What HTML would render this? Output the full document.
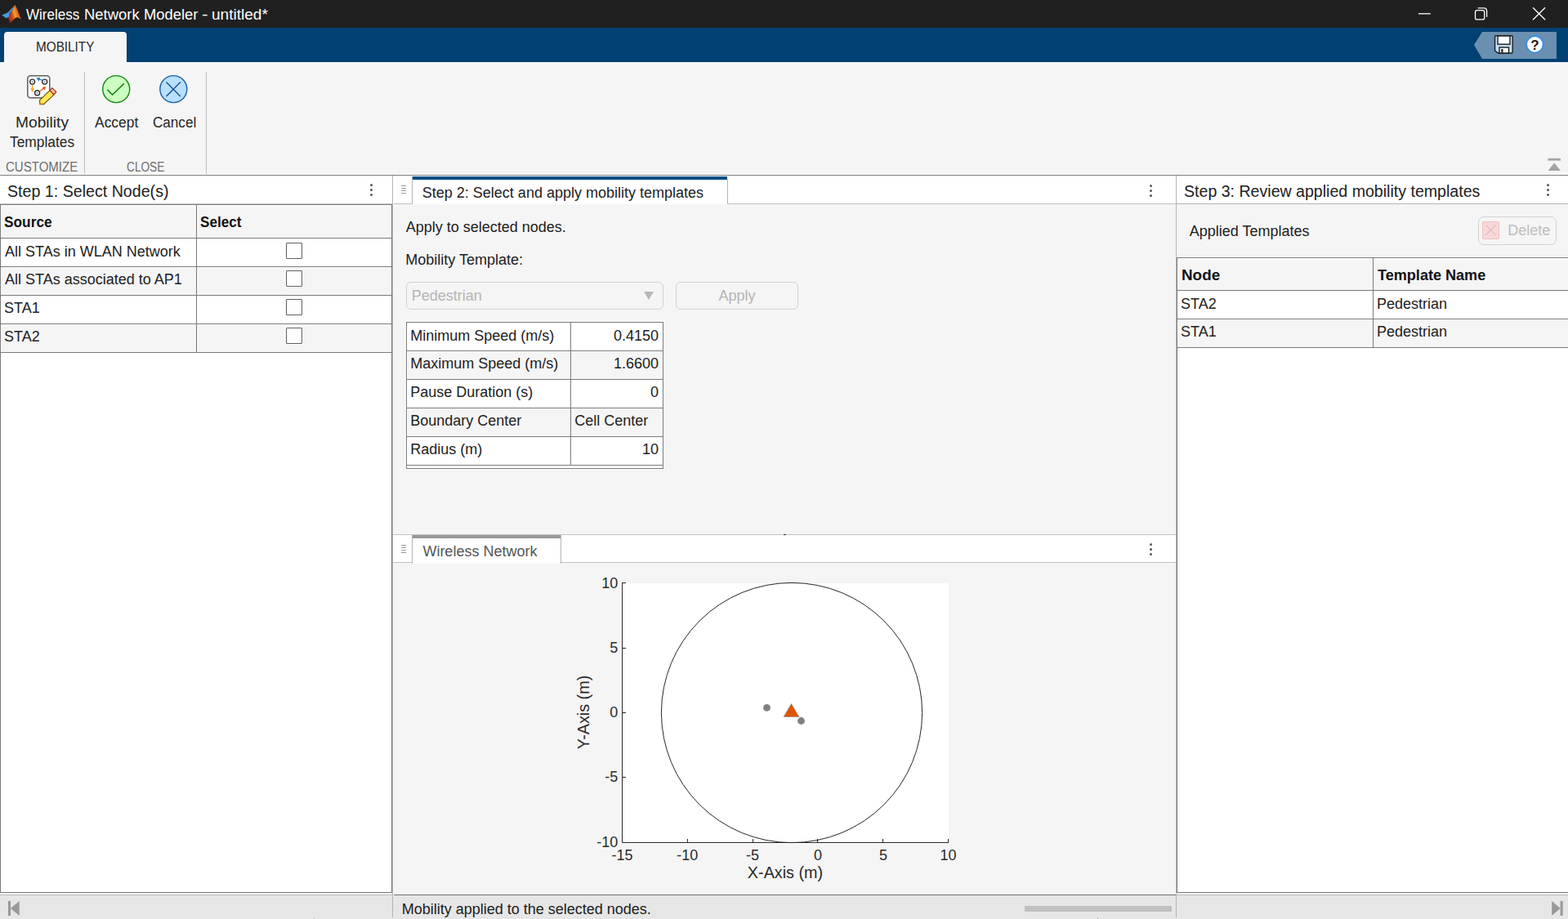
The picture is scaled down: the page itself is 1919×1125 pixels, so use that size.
<!DOCTYPE html>
<html lang="en">
<head>
<meta charset="utf-8">
<title>Wireless Network Modeler - untitled*</title>
<style>
*{box-sizing:border-box;margin:0;padding:0}
html,body{width:1919px;height:1125px;overflow:hidden;background:#f5f5f5}
body{position:relative;font-family:"Liberation Sans",sans-serif;font-size:18px;color:#212121}
.a{position:absolute}
.t{position:absolute;white-space:nowrap;line-height:1;transform-origin:0 0}
svg{position:absolute;overflow:visible}
#titlebar{left:0;top:0;width:1919px;height:34px;background:#202020}
#band{left:0;top:34px;width:1919px;height:42px;background:#004073}
#tab{left:5px;top:39px;width:150px;height:37px;background:#f5f5f5;border-radius:4px 4px 0 0}
#strip{left:0;top:76px;width:1919px;height:138px;background:#f5f5f5}
#stripline{left:0;top:214px;width:1919px;height:1px;background:#7d7d7d}
.vsep{width:1px;background:#bdbdbd;top:88px;height:126px}
.hdr{background:#fff}
.tbl{background:#fff;border:1px solid #7a7a7a}
.hl{position:absolute;height:1px;background:#7a7a7a}
.vl{position:absolute;width:1px;background:#7a7a7a}
.bg{position:absolute;background:#f5f5f5}
.cb{position:absolute;width:20px;height:20px;border:1px solid #5e5e5e;background:#fff;border-radius:1px;box-shadow:0 0 0 1px #fff}
.dot{position:absolute;width:3px;height:3px;border-radius:50%;background:#555}
.gl{position:absolute;width:6px;height:1px;background:#9a9a9a}
.div{position:absolute;background:#b4b4b4}
</style>
</head>
<body>
<!-- ===== title bar ===== -->
<div class="a" id="titlebar"></div>
<svg style="left:0;top:0" width="34" height="34" viewBox="0 0 34 34">
 <defs>
  <linearGradient id="lgo" gradientUnits="userSpaceOnUse" x1="10" y1="20" x2="26" y2="15">
   <stop offset="0" stop-color="#a82a14"/><stop offset="0.3" stop-color="#cf4a1c"/><stop offset="0.5" stop-color="#f6a324"/><stop offset="0.68" stop-color="#e8701e"/><stop offset="1" stop-color="#c0401a"/>
  </linearGradient>
 </defs>
 <path d="M2.2 18.4 L9.2 15.4 L15 9.8 L18.2 6.2 L14 14 L10.6 21 L7.4 22.2 Z" fill="#4a9be0"/>
 <path d="M10.8 15.8 L13.6 13.2 L11.6 18.6 Z" fill="#5a3550" opacity="0.7"/>
 <path d="M18.4 6 C20 8.5 21.5 12.5 23 16.5 C24 19.5 25 22 26 23.8 C24.5 23 22.5 21.2 20.6 21.3 C18.5 21.6 15.5 25.5 12.4 27.9 L10.2 21.6 C12 19.5 13.5 16 15.2 12.5 C16.3 10.2 17.3 7.6 18.4 6 Z" fill="url(#lgo)"/>
</svg>
<svg style="left:1730px;top:0" width="170" height="34" viewBox="1730 0 170 34" fill="none" stroke="#fff" stroke-width="1.3">
 <path d="M1736 16.8 H1750.8"/>
 <rect x="1805.5" y="12.7" width="11.2" height="11.2" rx="2.2"/>
 <path d="M1808.6 9.8 H1815.8 Q1819.6 9.8 1819.6 13.6 V20.8"/>
 <path d="M1876 9.2 L1891.1 24.2 M1891.1 9.2 L1876 24.2"/>
</svg>
<!-- ===== blue band ===== -->
<div class="a" id="band"></div>
<div class="a" id="tab"></div>
<svg style="left:1800px;top:34px" width="119" height="42" viewBox="1800 34 119 42">
 <path d="M1804 55 L1814 39 H1905 V72 H1814 Z" fill="#6a8fb0"/>
 <!-- save icon -->
 <path d="M1830.5 43.8 H1850 Q1851.2 43.8 1851.2 45 V63.8 Q1851.2 65 1850 65 H1833.5 L1829.6 62 V45 Q1829.6 43.8 1830.5 43.8 Z" fill="#bfe0ff" stroke="#1c1c1c" stroke-width="1.4"/>
 <rect x="1833" y="44" width="15" height="10.2" fill="#fff" stroke="#1c1c1c" stroke-width="1.4"/>
 <rect x="1835" y="58" width="11.5" height="7" fill="#fff" stroke="#1c1c1c" stroke-width="1.4"/>
 <rect x="1837.3" y="60" width="2.2" height="4.5" fill="#1c1c1c"/>
 <!-- help -->
 <circle cx="1878.4" cy="54.3" r="10.2" fill="#fff" stroke="#2f8fe6" stroke-width="1.6"/>
 <text x="1878.4" y="60.5" text-anchor="middle" font-family="Liberation Sans, sans-serif" font-weight="bold" font-size="17" fill="#1a1a1a">?</text>
</svg>
<!-- ===== toolstrip ===== -->
<div class="a" id="strip"></div>
<div class="a vsep" style="left:103px"></div>
<div class="a vsep" style="left:252px"></div>
<div class="a" style="left:0;top:213px;width:1919px;height:1px;background:#fcfcfc"></div>
<div class="a" id="stripline"></div>
<svg style="left:0;top:76px" width="260" height="138" viewBox="0 76 260 138">
 <!-- mobility templates icon -->
 <rect x="33.8" y="92.8" width="27" height="27" rx="3.5" fill="#fff" stroke="#5e5e5e" stroke-width="1.5"/>
 <g fill="#fff" stroke="#2e2e2e" stroke-width="1.4">
  <circle cx="39.6" cy="100.1" r="3"/><circle cx="54.7" cy="100.1" r="3"/><circle cx="45.6" cy="113.7" r="3"/>
 </g>
 <g fill="#555"><circle cx="39.6" cy="100.1" r="0.8"/><circle cx="54.7" cy="100.1" r="0.8"/><circle cx="45.6" cy="113.7" r="0.8"/></g>
 <path d="M51.5 98.2 L47.5 96.8" stroke="#1f7fd6" stroke-width="1.3" fill="none"/>
 <path d="M44.3 95.6 L49.2 94.8 L47.6 99.4 Z" fill="#1f7fd6"/>
 <path d="M39.6 104 V109" stroke="#f4a020" stroke-width="1.3" fill="none"/>
 <path d="M37.3 108.2 H41.9 L39.6 113 Z" fill="#f4a020"/>
 <path d="M49 111.4 L53.2 108.2" stroke="#e85d0c" stroke-width="1.3" fill="none"/>
 <path d="M56.3 106 L54.6 110.6 L51.6 106.8 Z" fill="#e85d0c"/>
 <!-- pencil -->
 <path d="M48.6 122.6 L61 110.6 L66 115.8 L53.6 127.6 H48.6 Z" fill="#ffe65c" stroke="#6b4a00" stroke-width="1.1" stroke-linejoin="round"/>
 <path d="M61 110.6 L63.8 107.6 L68.8 112.6 L66 115.8 Z" fill="#f3c9a0" stroke="#a8321c" stroke-width="1.3" stroke-linejoin="round"/>
 <path d="M48.9 125.3 V127.3 H52.6" fill="none" stroke="#c8741c" stroke-width="1.4"/>
 <!-- accept -->
 <circle cx="142.2" cy="109.1" r="16.5" fill="#ccffc2" stroke="#108a10" stroke-width="1.4"/>
 <path d="M131.3 109.7 L137.6 116 L151.9 102.3" fill="none" stroke="#0a7a0a" stroke-width="1.5"/>
 <!-- cancel -->
 <circle cx="212.3" cy="109.1" r="16.5" fill="#b8e0ff" stroke="#1b5cae" stroke-width="1.4"/>
 <path d="M203.5 100.5 L220.8 117.9 M220.8 100.5 L203.5 117.9" fill="none" stroke="#1b4f96" stroke-width="1.4"/>
 </svg>
<svg style="left:1890px;top:190px" width="24" height="24" viewBox="1890 190 24 24">
 <rect x="1894.5" y="193.8" width="15.5" height="2.8" fill="#a3a3a3"/>
 <path d="M1894.5 208.9 L1902.2 199.4 L1910 208.9 Z" fill="#a3a3a3"/>
</svg>

<!-- ===== LEFT PANEL ===== -->
<div class="a hdr" style="left:0;top:215px;width:480px;height:35px"></div><div class="a" style="left:0;top:249px;width:480px;height:1px;background:#c6c6c6"></div>
<div class="a tbl" style="left:0;top:250px;width:480px;height:843px"></div>
<div class="bg" style="left:2px;top:252px;width:238px;height:39px"></div><div class="bg" style="left:241px;top:252px;width:238px;height:39px"></div>
<div class="bg" style="left:2px;top:328px;width:238px;height:33px"></div><div class="bg" style="left:241px;top:328px;width:238px;height:33px"></div>
<div class="bg" style="left:2px;top:398px;width:238px;height:33px"></div><div class="bg" style="left:241px;top:398px;width:238px;height:33px"></div>
<div class="hl" style="left:0;top:291px;width:480px"></div>
<div class="hl" style="left:0;top:326px;width:480px"></div>
<div class="hl" style="left:0;top:361px;width:480px"></div>
<div class="hl" style="left:0;top:396px;width:480px"></div>
<div class="hl" style="left:0;top:431px;width:480px"></div>
<div class="vl" style="left:240px;top:250px;height:182px"></div>
<div class="cb" style="left:350px;top:297px"></div>
<div class="cb" style="left:350px;top:331px"></div>
<div class="cb" style="left:350px;top:366px"></div>
<div class="cb" style="left:350px;top:401px"></div>
<div class="dot" style="left:452.5px;top:224.5px"></div><div class="dot" style="left:452.5px;top:230.5px"></div><div class="dot" style="left:452.5px;top:236.5px"></div>

<!-- ===== MIDDLE PANEL (top) ===== -->
<div class="div" style="left:480px;top:215px;width:1px;height:908px"></div>
<div class="a hdr" style="left:481px;top:215px;width:958px;height:34px"></div>
<div class="div" style="left:482px;top:249px;width:957px;height:1px;background:#c2c2c2"></div>
<div class="a" style="left:504px;top:216px;width:387px;height:34px;background:#fff;border-left:1px solid #b4b4b4;border-right:1px solid #b4b4b4"></div>
<div class="a" style="left:505px;top:216px;width:385px;height:4px;background:#004b87"></div><div class="a" style="left:890px;top:216px;width:1px;height:4px;background:#fff"></div>
<div class="gl" style="left:491px;top:227px"></div><div class="gl" style="left:491px;top:230px"></div><div class="gl" style="left:491px;top:233px"></div><div class="gl" style="left:491px;top:236px"></div>
<div class="dot" style="left:1406.5px;top:225.5px"></div><div class="dot" style="left:1406.5px;top:231.5px"></div><div class="dot" style="left:1406.5px;top:237.5px"></div>
<!-- dropdown + button -->
<div class="a" style="left:497px;top:345px;width:315px;height:34px;border:1px solid #d2d2d2;border-radius:6px;background:#f5f5f5"></div>
<svg style="left:785px;top:354px" width="18" height="16" viewBox="785 354 18 16"><path d="M788 357 H800 L794 367 Z" fill="#b8b8b8"/></svg>
<div class="a" style="left:827px;top:345px;width:150px;height:34px;border:1px solid #d2d2d2;border-radius:6px;background:#f5f5f5"></div>
<!-- property table -->
<div class="a tbl" style="left:497px;top:394px;width:315px;height:180px;box-shadow:0 0 0 1px #fafafa"></div>
<div class="bg" style="left:499px;top:431px;width:199px;height:33px"></div><div class="bg" style="left:699px;top:431px;width:112px;height:33px"></div>
<div class="bg" style="left:499px;top:501px;width:199px;height:33px"></div><div class="bg" style="left:699px;top:501px;width:112px;height:33px"></div>
<div class="hl" style="left:497px;top:429px;width:315px"></div>
<div class="hl" style="left:497px;top:464px;width:315px"></div>
<div class="hl" style="left:497px;top:499px;width:315px"></div>
<div class="hl" style="left:497px;top:534px;width:315px"></div>
<div class="hl" style="left:497px;top:569px;width:315px"></div>
<div class="vl" style="left:698px;top:394px;height:176px"></div>

<!-- ===== MIDDLE PANEL (bottom) ===== -->
<div class="div" style="left:481px;top:654px;width:958px;height:1px;background:#c2c2c2"></div>
<div class="a hdr" style="left:481px;top:655px;width:958px;height:33px"></div>
<div class="div" style="left:481px;top:688px;width:958px;height:1px;background:#c2c2c2"></div>
<div class="a" style="left:504px;top:655px;width:183px;height:35px;background:#fff;border-left:1px solid #b4b4b4;border-right:1px solid #b4b4b4"></div>
<div class="a" style="left:505px;top:655px;width:181px;height:4px;background:#999"></div>
<div class="gl" style="left:491px;top:667px"></div><div class="gl" style="left:491px;top:670px"></div><div class="gl" style="left:491px;top:673px"></div><div class="gl" style="left:491px;top:676px"></div>
<div class="dot" style="left:1406.5px;top:664.5px"></div><div class="dot" style="left:1406.5px;top:670.5px"></div><div class="dot" style="left:1406.5px;top:676.5px"></div>
<div class="a" style="left:959px;top:654px;width:3px;height:1px;background:#222"></div>
<!-- plot -->
<svg style="left:481px;top:689px" width="958" height="406" viewBox="481 689 958 406" font-family="Liberation Sans, sans-serif" fill="#2b2b2b">
 <rect x="760" y="714" width="401" height="319" fill="#fff"/>
 <rect x="760" y="712" width="7" height="3" fill="#fff"/>
 <ellipse cx="969" cy="872.5" rx="159.6" ry="159.1" fill="none" stroke="#262626" stroke-width="1"/>
 <path d="M761.5 713 V1031.5 H1161" fill="none" stroke="#262626" stroke-width="1"/>
 <path d="M841.5 1031.5 v-4.5 M921.5 1031.5 v-4.5 M1000.5 1031.5 v-4.5 M1080.5 1031.5 v-4.5 M1160.5 1031.5 v-4.5 M761.5 713.5 h4.5 M761.5 793.5 h4.5 M761.5 872.5 h4.5 M761.5 951.5 h4.5" fill="none" stroke="#262626" stroke-width="1"/>
 <circle cx="938.5" cy="866.4" r="4.4" fill="#808080"/>
 <circle cx="980.5" cy="882.5" r="4.4" fill="#808080"/>
 <path d="M968.5 861.6 L977.8 877.4 H959.2 Z" fill="#e05400" stroke="#8a8a8a" stroke-width="0.7"/>
 <g font-size="18" text-anchor="end">
  <text x="756.2" y="719.6">10</text><text x="756.2" y="798.8">5</text><text x="756.2" y="878.2">0</text><text x="756.2" y="957.4">-5</text><text x="756.2" y="1036.8">-10</text>
 </g>
 <g font-size="18" text-anchor="middle">
  <text x="761.5" y="1052.7">-15</text><text x="841.3" y="1052.7">-10</text><text x="921" y="1052.7">-5</text><text x="1001" y="1052.7">0</text><text x="1081" y="1052.7">5</text><text x="1160.5" y="1052.7">10</text>
 </g>
 <text x="961" y="1074.5" font-size="19.8" text-anchor="middle">X-Axis (m)</text>
 <text transform="translate(720.5 872) rotate(-90)" font-size="19.8" text-anchor="middle">Y-Axis (m)</text>
</svg>

<!-- ===== RIGHT PANEL ===== -->
<div class="div" style="left:1439px;top:215px;width:1px;height:908px"></div>
<div class="a hdr" style="left:1440px;top:215px;width:479px;height:34px"></div>
<div class="div" style="left:1440px;top:249px;width:479px;height:1px;background:#b4b4b4"></div>
<div class="dot" style="left:1892.5px;top:224.5px"></div><div class="dot" style="left:1892.5px;top:230.5px"></div><div class="dot" style="left:1892.5px;top:236.5px"></div>
<div class="a" style="left:1809px;top:265px;width:96px;height:35px;border:1px solid #d2d2d2;border-radius:7px;background:#f5f5f5"></div>
<svg style="left:1812px;top:269px" width="26" height="26" viewBox="1812 269 26 26">
 <rect x="1814.5" y="271.5" width="20" height="21" rx="1.5" fill="#f8d7d7" stroke="#efc2c2" stroke-width="1"/>
 <path d="M1818.5 275.5 L1830.5 287.8 M1830.5 275.5 L1818.5 287.8" stroke="#c9b0ae" stroke-width="1" fill="none"/>
</svg>
<div class="a" style="left:1440px;top:314px;width:479px;height:1px;background:#fdfdfd"></div>
<div class="a tbl" style="left:1440px;top:315px;width:480px;height:778px"></div>
<div class="bg" style="left:1442px;top:317px;width:238px;height:38px"></div><div class="bg" style="left:1681px;top:317px;width:238px;height:38px"></div>
<div class="bg" style="left:1442px;top:392px;width:238px;height:33px"></div><div class="bg" style="left:1681px;top:392px;width:238px;height:33px"></div>
<div class="hl" style="left:1440px;top:355px;width:479px"></div>
<div class="hl" style="left:1440px;top:390px;width:479px"></div>
<div class="hl" style="left:1440px;top:425px;width:479px"></div>
<div class="vl" style="left:1680px;top:315px;height:111px"></div>

<!-- ===== STATUS BAR ===== -->
<div class="a" style="left:0;top:1096px;width:1919px;height:29px;background:#e6e6e6"></div>
<div class="a" style="left:0;top:1095px;width:480px;height:1px;background:#bcbcbc"></div>
<div class="a" style="left:482px;top:1095px;width:957px;height:1px;background:#707070"></div>
<div class="a" style="left:1440px;top:1095px;width:479px;height:1px;background:#bcbcbc"></div>
<div class="div" style="left:480px;top:1096px;width:1px;height:27px"></div>
<div class="div" style="left:1439px;top:1096px;width:1px;height:27px"></div>
<div class="a" style="left:1254px;top:1109px;width:180px;height:7px;background:#c0c0c0"></div>
<div class="a" style="left:384px;top:1123px;width:1px;height:2px;background:#bbb"></div><div class="a" style="left:385px;top:1123px;width:1px;height:2px;background:#f2f2f2"></div>
<div class="a" style="left:1343px;top:1123px;width:1px;height:2px;background:#b0b0b0"></div>
<svg style="left:0;top:1096px" width="1919" height="29" viewBox="0 1096 1919 29" fill="#999">
 <rect x="10" y="1103" width="3" height="18"/><path d="M13 1112 L23.7 1103 V1121 Z"/>
 <rect x="1909.6" y="1103" width="3.1" height="18"/><path d="M1909.6 1112 L1899.2 1103 V1121 Z"/>
</svg>

<span class="t" style="left:32.10px;top:10.04px;font-size:17.6px;color:#ffffff;transform:scaleX(0.9687)">Wireless</span>
<span class="t" style="left:102.88px;top:10.04px;font-size:17.6px;color:#ffffff;transform:scaleX(1.0479)">Network</span>
<span class="t" style="left:175.65px;top:10.04px;font-size:17.6px;color:#ffffff;transform:scaleX(1.0437)">Modeler</span>
<span class="t" style="left:246.55px;top:10.04px;font-size:17.6px;color:#ffffff;transform:scaleX(1.2722)">-</span>
<span class="t" style="left:258.70px;top:10.04px;font-size:17.6px;color:#ffffff;transform:scaleX(1.0826)">untitled*</span>
<span class="t" style="left:43.70px;top:49.72px;font-size:16.8px;color:#262626;transform:scaleX(0.9117)">MOBILITY</span>
<span class="t" style="left:18.70px;top:142.04px;font-size:17.6px;color:#262626;transform:scaleX(1.0899)">Mobility</span>
<span class="t" style="left:11.90px;top:166.04px;font-size:17.6px;color:#262626;transform:scaleX(0.9863)">Templates</span>
<span class="t" style="left:116.00px;top:142.04px;font-size:17.6px;color:#262626;transform:scaleX(0.9908)">Accept</span>
<span class="t" style="left:186.65px;top:142.04px;font-size:17.6px;color:#262626;transform:scaleX(0.9710)">Cancel</span>
<span class="t" style="left:7.00px;top:196.57px;font-size:15.8px;color:#6e6e6e;transform:scaleX(0.9512)">CUSTOMIZE</span>
<span class="t" style="left:155.00px;top:196.57px;font-size:15.8px;color:#6e6e6e;transform:scaleX(0.8658)">CLOSE</span>
<span class="t" style="left:5.00px;top:264.04px;font-size:17.6px;color:#111;font-weight:bold;transform:scaleX(0.9828)">Source</span>
<span class="t" style="left:244.90px;top:264.04px;font-size:17.6px;color:#111;font-weight:bold;transform:scaleX(0.9707)">Select</span>
<span class="t" style="left:1445.70px;top:329.04px;font-size:17.6px;color:#111;font-weight:bold;transform:scaleX(1.0723)">Node</span>
<span class="t" style="left:1686.00px;top:329.04px;font-size:17.6px;color:#111;font-weight:bold;transform:scaleX(1.0272)">Template Name</span>
<span class="t" style="left:491.65px;top:1103.70px;font-size:18px">Mobility applied to the selected nodes.</span>
<span class="t" style="left:9.10px;top:225.43px;font-size:19.5px;transform:scaleX(1.0067)">Step 1: Select Node(s)</span>
<span class="t" style="left:6.10px;top:298.70px;font-size:18px">All STAs in WLAN Network</span>
<span class="t" style="left:6.10px;top:332.70px;font-size:18px">All STAs associated to AP1</span>
<span class="t" style="left:5.00px;top:367.70px;font-size:18px">STA1</span>
<span class="t" style="left:5.00px;top:402.70px;font-size:18px">STA2</span>
<span class="t" style="left:516.80px;top:226.70px;font-size:18px">Step 2: Select and apply mobility templates</span>
<span class="t" style="left:496.70px;top:269.20px;font-size:18px">Apply to selected nodes.</span>
<span class="t" style="left:496.20px;top:309.10px;font-size:18px">Mobility Template:</span>
<span class="t" style="left:503.65px;top:352.70px;font-size:18px;color:#b4b4b4">Pedestrian</span>
<span class="t" style="left:879.50px;top:352.70px;font-size:18px;color:#b4b4b4">Apply</span>
<span class="t" style="left:502.20px;top:401.70px;font-size:18px">Minimum Speed (m/s)</span>
<span class="t" style="left:751.00px;top:401.70px;font-size:18px">0.4150</span>
<span class="t" style="left:502.20px;top:435.70px;font-size:18px">Maximum Speed (m/s)</span>
<span class="t" style="left:751.00px;top:435.70px;font-size:18px">1.6600</span>
<span class="t" style="left:502.20px;top:470.70px;font-size:18px">Pause Duration (s)</span>
<span class="t" style="left:796.00px;top:470.70px;font-size:18px">0</span>
<span class="t" style="left:502.20px;top:505.70px;font-size:18px">Boundary Center</span>
<span class="t" style="left:703.20px;top:505.70px;font-size:18px">Cell Center</span>
<span class="t" style="left:502.20px;top:540.70px;font-size:18px">Radius (m)</span>
<span class="t" style="left:786.00px;top:540.70px;font-size:18px">10</span>
<span class="t" style="left:517.40px;top:665.70px;font-size:18px;color:#555">Wireless Network</span>
<span class="t" style="left:1449.35px;top:225.43px;font-size:19.5px;transform:scaleX(1.0039)">Step 3: Review applied mobility templates</span>
<span class="t" style="left:1455.75px;top:274.40px;font-size:18px">Applied Templates</span>
<span class="t" style="left:1845.35px;top:272.50px;font-size:18px;color:#bdbdbd">Delete</span>
<span class="t" style="left:1445.00px;top:362.70px;font-size:18px">STA2</span>
<span class="t" style="left:1685.00px;top:362.70px;font-size:18px">Pedestrian</span>
<span class="t" style="left:1445.00px;top:397.20px;font-size:18px">STA1</span>
<span class="t" style="left:1685.00px;top:397.20px;font-size:18px">Pedestrian</span>
</body>
</html>
